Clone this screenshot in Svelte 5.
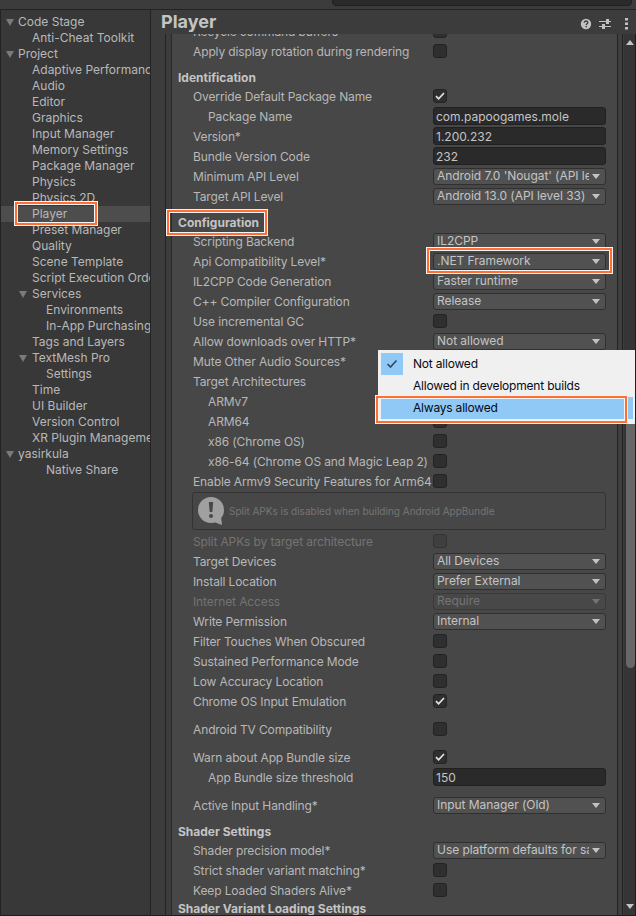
<script>
  const tree = [
    [0, 'Code Stage', 1], [1, 'Anti-Cheat Toolkit'], [0, 'Project', 1],
    [1, 'Adaptive Performance'], [1, 'Audio'], [1, 'Editor'], [1, 'Graphics'], [1, 'Input Manager'],
    [1, 'Memory Settings'], [1, 'Package Manager'], [1, 'Physics'], [1, 'Physics 2D'], [1, 'Player', 0, 1],
    [1, 'Preset Manager'], [1, 'Quality'], [1, 'Scene Template'], [1, 'Script Execution Order'],
    [1, 'Services', 1], [2, 'Environments'], [2, 'In-App Purchasing'], [1, 'Tags and Layers'],
    [1, 'TextMesh Pro', 1], [2, 'Settings'], [1, 'Time'], [1, 'UI Builder'], [1, 'Version Control'],
    [1, 'XR Plugin Management'], [0, 'yasirkula', 1], [2, 'Native Share']
  ].map(([level, label, open, selected]) => ({ level, label, open, selected }));

  const c = (label, extra = {}) => ({ label, kind: 'check', ...extra });
  const k = (label, extra = {}) => ({ label, kind: 'checked', ...extra });
  const d = (label, value, extra = {}) => ({ label, value, kind: 'drop', ...extra });
  const t = (label, value, extra = {}) => ({ label, value, kind: 'input', ...extra });
  const h = (label, cls = '') => ({ label, kind: 'heading', cls });

  const rows = [
    c('Recycle command buffers'),
    c('Apply display rotation during rendering'),
    h('Identification', 'gap5 low'),
    k('Override Default Package Name'),
    t('Package Name', 'com.papoogames.mole', { indent: 1 }),
    t('Version*', '1.200.232'),
    t('Bundle Version Code', '232'),
    d('Minimum API Level', "Android 7.0 'Nougat' (API level 24)"),
    d('Target API Level', 'Android 13.0 (API level 33)'),
    h('Configuration', 'gap6'),
    d('Scripting Backend', 'IL2CPP', { cls: 'tight' }),
    d('Api Compatibility Level*', '.NET Framework'),
    d('IL2CPP Code Generation', 'Faster runtime'),
    d('C++ Compiler Configuration', 'Release'),
    c('Use incremental GC'),
    d('Allow downloads over HTTP*', 'Not allowed'),
    c('Mute Other Audio Sources*'),
    { label: 'Target Architectures', kind: 'none' },
    c('ARMv7', { indent: 1 }),
    c('ARM64', { indent: 1 }),
    c('x86 (Chrome OS)', { indent: 1 }),
    c('x86-64 (Chrome OS and Magic Leap 2)', { indent: 1 }),
    c('Enable Armv9 Security Features for Arm64'),
    { kind: 'help', label: 'Split APKs is disabled when building Android AppBundle' },
    c('Split APKs by target architecture', { off: 1 }),
    d('Target Devices', 'All Devices'),
    d('Install Location', 'Prefer External'),
    d('Internet Access', 'Require', { off: 1 }),
    d('Write Permission', 'Internal'),
    c('Filter Touches When Obscured'),
    c('Sustained Performance Mode'),
    c('Low Accuracy Location'),
    k('Chrome OS Input Emulation'),
    c('Android TV Compatibility', { cls: 'gap8' }),
    k('Warn about App Bundle size', { cls: 'gap8' }),
    t('App Bundle size threshold', '150', { indent: 1 }),
    d('Active Input Handling*', 'Input Manager (Old)', { cls: 'gap8' }),
    h('Shader Settings', 'gap6'),
    d('Shader precision model*', 'Use platform defaults for sampler precision', { cls: 'tight' }),
    c('Strict shader variant matching*'),
    c('Keep Loaded Shaders Alive*'),
    h('Shader Variant Loading Settings', 'tight2')
  ];

  const menu = ['Not allowed', 'Allowed in development builds', 'Always allowed'];
</script>

<div class="screen">
  <div class="topbar"><div class="search"></div></div>
  <div class="body">
    <nav class="tree">
      {#each tree as n}
        <div class="node l{n.level}" class:selected={n.selected}>
          {#if n.open}<i class="tri"></i>{/if}
          <span>{n.label}</span>
        </div>
      {/each}
    </nav>
    <main class="inspector">
      <header class="title">
        <h1>Player</h1>
        <div class="tools">
          <svg width="12" height="12" viewBox="0 0 12 12"><circle cx="6" cy="6" r="5.2" fill="#c2c2c2"/><path d="M4.2 4.7c0-1.1.8-1.7 1.8-1.7s1.8.6 1.8 1.5c0 1.4-1.6 1.3-1.6 2.6" fill="none" stroke="#3c3c3c" stroke-width="1.3"/><rect x="5.5" y="7.9" width="1.4" height="1.4" fill="#3c3c3c"/></svg>
          <svg width="12" height="12" viewBox="0 0 12 12" fill="#c2c2c2"><rect x="0" y="3" width="12" height="1"/><rect x="0" y="8" width="12" height="1"/><rect x="7" y="1" width="3" height="5"/><rect x="3" y="6" width="3" height="5"/></svg>
          <svg width="4" height="12" viewBox="0 0 4 12" fill="#c2c2c2"><rect x="0" y="0" width="3" height="2.5"/><rect x="0" y="4.5" width="3" height="2.5"/><rect x="0" y="9" width="3" height="2.5"/></svg>
        </div>
      </header>
      <div class="panes">
        <div class="gutter"></div>
        <div class="content">
          <div class="list">
            {#each rows as r}
              {#if r.kind === 'heading'}
                <div class="heading {r.cls}">{r.label}</div>
              {:else if r.kind === 'help'}
                <div class="help">
                  <svg width="26" height="28" viewBox="0 0 26 28"><circle cx="13" cy="13" r="13" fill="#a0a0a0"/><polygon points="16,25 23,20 24,28" fill="#a0a0a0"/><polygon points="10.800,5 15.200,5 14.300,15 11.700,15" fill="#474747"/><circle cx="13" cy="19" r="2" fill="#474747"/></svg>
                  <span>{r.label}</span>
                </div>
              {:else}
                <div class="row {r.cls ?? ''}" class:off={r.off}>
                  <label class:indent={r.indent}>{r.label}</label>
                  {#if r.kind === 'check' || r.kind === 'checked'}
                    <div class="box">
                      {#if r.kind === 'checked'}
                        <svg width="10" height="8" viewBox="0 0 10 8"><path d="M1 4.200 3.600 6.800 9 1" fill="none" stroke="#e2e2e2" stroke-width="1.700"/></svg>
                      {/if}
                    </div>
                  {:else if r.kind === 'input'}
                    <div class="input">{r.value}</div>
                  {:else if r.kind === 'drop'}
                    <div class="drop"><span>{r.value}</span><i class="caret"></i></div>
                  {/if}
                </div>
              {/if}
            {/each}
          </div>
        </div>
        <div class="rail"></div>
        <div class="scroll">
          <i class="up"></i>
          <div class="thumb"></div>
          <i class="down"></i>
        </div>
      </div>
    </main>
  </div>

  <div class="mark mark-player"></div>
  <div class="mark mark-config"></div>
  <div class="mark mark-net"></div>

  <div class="popup">
    {#each menu as m, i}
      <div class="item" class:active={i === 2}>
        <div class="tick" class:on={i === 0}>
          {#if i === 0}
            <svg width="12" height="10" viewBox="0 0 12 10"><path d="M1.500 5 4.500 8 10.500 1.500" fill="none" stroke="#2b4a66" stroke-width="1.600"/></svg>
          {/if}
        </div>
        <span>{m}</span>
      </div>
    {/each}
  </div>
  <div class="mark mark-menu"></div>
</div>

<style>
  :global(body) { margin: 0; background: #383838; }
  .screen {
    position: relative;
    width: 636px;
    height: 916px;
    overflow: hidden;
    display: flex;
    flex-direction: column;
    font: 12px/16px Inter, "Liberation Sans", sans-serif;
    color: #b8b8b8;
    background: #383838;
  }
  .topbar {
    height: 9px;
    flex: none;
    background: #3c3c3c;
    border-bottom: 1px solid #232323;
    position: relative;
    overflow: hidden;
  }
  .search {
    margin: -8px 0 0 332px;
    width: 300px;
    height: 14px;
    background: #2a2a2a;
    border: 1px solid #202020;
    border-radius: 4px;
    box-sizing: border-box;
  }
  .body { flex: 1; display: flex; min-height: 0; border-bottom: 1px solid #1e1e1e; }

  .tree {
    flex: none;
    box-sizing: border-box;
    padding-top: 4px;
    background: #383838;
    border-left: 1px solid #232323;
    border-right: 1px solid #232323;
    width: 151px;
    overflow: hidden;
  }
  .node {
    position: relative;
    height: 16px;
    white-space: nowrap;
    overflow: hidden;
    box-sizing: border-box;
  }
  .node.l0 { padding-left: 17px; }
  .node.l1 { padding-left: 31px; }
  .node.l2 { padding-left: 45px; }
  .node.selected { background: #4d4d4d; }
  .tri {
    position: absolute;
    top: 5px;
    border-left: 4px solid transparent;
    border-right: 4px solid transparent;
    border-top: 7px solid #7a7a7a;
  }
  .l0 .tri { left: 5px; }
  .l1 .tri { left: 18px; }

  .inspector { flex: 1; min-width: 0; display: flex; flex-direction: column; background: #3c3c3c; }
  .title {
    height: 24px;
    flex: none;
    display: flex;
    align-items: center;
    justify-content: space-between;
    padding: 0 7px 0 10px;
  }
  h1 { margin: 0; font-size: 18px; line-height: 24px; font-weight: 700; color: #c4c4c4; }
  .tools { display: flex; align-items: center; gap: 7px; margin-top: 3px; }
  .tools svg:last-child { margin-left: 7px; }

  .panes { flex: 1; min-height: 0; display: flex; }
  .gutter {
    width: 14px;
    flex: none;
    background: #3c3c3c;
    border-right: 1px solid #232323;
  }
  .content {
    flex: 1;
    min-width: 0;
    overflow: hidden;
    background: #474747;
    border-left: 5px solid #3c3c3c;
    border-right: 1px solid #232323;
    box-shadow: inset 1px 0 0 #2a2a2a;
  }
  .list { margin-top: -12px; }
  .rail {
    width: 4px;
    flex: none;
    background: #3f3f3f;
    border-right: 1px solid #232323;
  }
  .scroll {
    position: relative;
    width: 13px;
    flex: none;
    background: #353535;
    border-left: 1px solid #3c3c3c;
    border-right: 1px solid #1e1e1e;
    box-sizing: border-box;
  }
  .thumb {
    position: absolute;
    left: 2px;
    right: 0;
    top: 346px;
    height: 288px;
    background: #676767;
    border-radius: 0 0 5px 5px;
  }
  .up, .down {
    position: absolute;
    left: 2px;
    border-left: 4px solid transparent;
    border-right: 4px solid transparent;
  }
  .up { top: 6px; border-bottom: 5px solid #c4c4c4; }
  .down { bottom: 6px; border-top: 5px solid #c4c4c4; }

  .row { height: 20px; display: flex; align-items: flex-start; }
  .row label {
    width: 262px;
    flex: none;
    padding: 2px 0 0 22px;
    box-sizing: border-box;
    white-space: nowrap;
    overflow: hidden;
    letter-spacing: -0.12px;
  }
  .row label.indent { padding-left: 37px; }
  .row.off { color: #747474; }
  .gap5 { margin-top: 5px; }
  .gap6 { margin-top: 6px; }
  .gap8 { margin-top: 8px; }
  .tight { margin-top: -1px; }
  .tight2 { margin-top: -2px; }
  .heading { height: 20px; padding: 2px 0 0 7px; box-sizing: border-box; font-weight: 700; color: #c4c4c4; }
  .heading.low { padding-top: 3px; }

  .box {
    width: 14px;
    height: 14px;
    margin-top: 2px;
    box-sizing: border-box;
    background: #2f2f2f;
    border: 1px solid #232323;
    border-radius: 3px;
    display: flex;
    align-items: center;
    justify-content: center;
  }
  .off .box { background: #3f3f3f; border-color: #343434; }
  .input {
    width: 173px;
    height: 18px;
    box-sizing: border-box;
    background: #2a2a2a;
    border: 1px solid #212121;
    border-radius: 3px;
    padding-left: 2px;
    line-height: 17px;
    color: #c4c4c4;
  }
  .drop {
    width: 173px;
    height: 17px;
    margin-top: 1px;
    box-sizing: border-box;
    background: #515151;
    border: 1px solid #303030;
    border-radius: 3px;
    padding: 0 4px 0 3px;
    display: flex;
    align-items: center;
    justify-content: space-between;
    color: #c4c4c4;
    letter-spacing: -0.05px;
  }
  .drop span { flex: 1; min-width: 0; overflow: hidden; white-space: nowrap; line-height: 15px; margin-top: -2px; height: 15px; }
  .off .drop { background: #484848; border-color: #393939; color: #747474; }
  .caret {
    flex: none;
    margin: 0 1px 0 3px;
    border-left: 4px solid transparent;
    border-right: 4px solid transparent;
    border-top: 5px solid #c4c4c4;
  }
  .off .caret { border-top-color: #747474; }

  .help {
    margin: 0 0 2px 21px;
    width: 414px;
    height: 38px;
    box-sizing: border-box;
    border: 1px solid #333;
    border-radius: 3px;
    padding-left: 5px;
    display: flex;
    align-items: center;
    gap: 5px;
    font-size: 10px;
    color: #757575;
  }

  .mark {
    position: absolute;
    box-sizing: border-box;
    border: 1px solid #f4f4f4;
    box-shadow: inset 0 0 0 2px #ff6f33, inset 0 0 0 3px #f4f4f4;
    pointer-events: none;
  }
  .mark-player { left: 14px; top: 201px; width: 84px; height: 25px; }
  .mark-config { left: 166px; top: 209px; width: 102px; height: 27px; }
  .mark-net { left: 426px; top: 247px; width: 187px; height: 27px; }
  .mark-menu { left: 375px; top: 395px; width: 253px; height: 29px; }

  .popup {
    position: absolute;
    left: 378px;
    top: 350px;
    width: 257px;
    height: 74px;
    box-sizing: border-box;
    padding: 3px 2px 0 3px;
    background: #f0f0f0;
    font-size: 12px;
    letter-spacing: -0.2px;
    color: #0a0a14;
  }
  .item { height: 22px; display: flex; align-items: center; gap: 10px; }
  .item.active { background: #90c8f6; }
  .tick { width: 22px; height: 22px; flex: none; display: flex; align-items: center; justify-content: center; }
  .tick.on { background: #90c8f6; }
</style>
